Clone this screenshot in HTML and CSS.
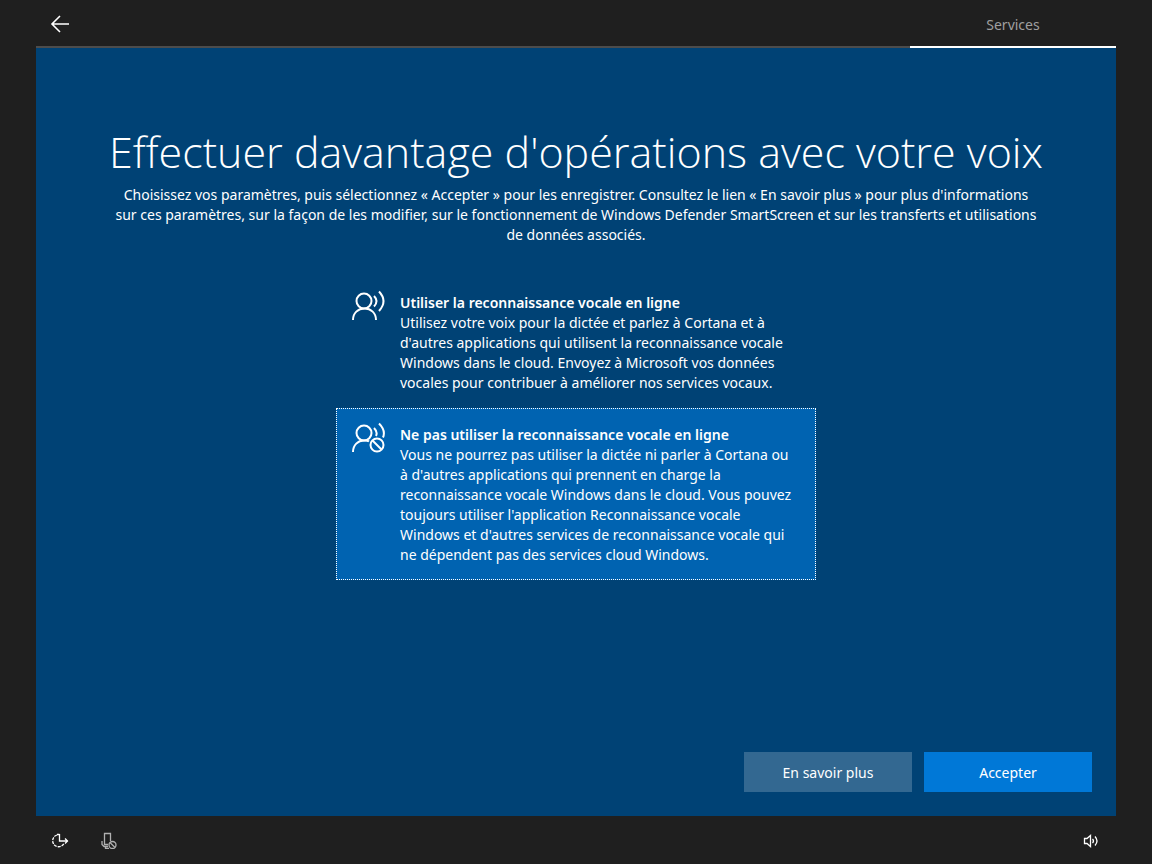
FILE: index.html
```html
<!DOCTYPE html>
<html lang="fr">

<head>
    <meta charset="utf-8">
    <title>Services</title>
    <link rel="stylesheet" href="styles.css">
</head>

<body>
    <header class="topbar">
        <button type="button" class="back" aria-label="Retour">
            <svg width="20" height="18" viewBox="0 0 20 18">
                <path d="M10 1L2 9l8 8M2 9h17" />
            </svg>
        </button>
        <nav class="steps">
            <a href="#services" class="step">Services</a>
        </nav>
    </header>

    <main id="services">
        <h1>Effectuer davantage d'opérations avec votre voix</h1>
        <p class="intro">
            Choisissez vos paramètres, puis sélectionnez « Accepter » pour les enregistrer. Consultez le lien « En savoir plus » pour plus d'informations<br>
            sur ces paramètres, sur la façon de les modifier, sur le fonctionnement de Windows Defender SmartScreen et sur les transferts et utilisations<br>
            de données associés.
        </p>

        <form id="form" action="">
            <div class="options">
                <div class="option">
                    <input type="radio" name="voix" id="voix-oui" value="oui">
                    <label for="voix-oui">
                        <svg width="34" height="32" viewBox="0 0 34 32">
                            <circle cx="12" cy="12" r="7.500" />
                            <path d="M1 31c0-7 5-11.500 11.500-11.500S24 24 24 31" />
                            <path d="M22 7q5 5 0 10.500M27 2.500q9 9.500 0 19.500" />
                        </svg>
                        <span class="text">
                            <b>Utiliser la reconnaissance vocale en ligne</b><br>
                            Utilisez votre voix pour la dictée et parlez à Cortana et à<br>
                            d'autres applications qui utilisent la reconnaissance vocale<br>
                            Windows dans le cloud. Envoyez à Microsoft vos données<br>
                            vocales pour contribuer à améliorer nos services vocaux.
                        </span>
                    </label>
                </div>
                <div class="option">
                    <input type="radio" name="voix" id="voix-non" value="non" checked>
                    <label for="voix-non">
                        <svg width="34" height="32" viewBox="0 0 34 32">
                            <circle cx="12" cy="12" r="7.500" />
                            <path d="M1 31c0-7 5-11.500 11-11.500 2 0 4 0 5 1" />
                            <path d="M22 7q4 4 2 8M27 2.500q7 7 4 14" />
                            <circle cx="25" cy="24" r="6.500" />
                            <path d="M20.500 19.500l9 9" />
                        </svg>
                        <span class="text">
                            <b>Ne pas utiliser la reconnaissance vocale en ligne</b><br>
                            Vous ne pourrez pas utiliser la dictée ni parler à Cortana ou<br>
                            à d'autres applications qui prennent en charge la<br>
                            reconnaissance vocale Windows dans le cloud. Vous pouvez<br>
                            toujours utiliser l'application Reconnaissance vocale<br>
                            Windows et d'autres services de reconnaissance vocale qui<br>
                            ne dépendent pas des services cloud Windows.
                        </span>
                    </label>
                </div>
            </div>
            <div class="actions">
                <button type="button">En savoir plus</button>
                <button type="submit" class="primary">Accepter</button>
            </div>
        </form>
    </main>

    <footer class="bottombar">
        <button type="button" aria-label="Options d'ergonomie">
            <svg width="18" height="18" viewBox="0 0 18 18">
                <path d="M6 4a6 6 0 1 0 7 8.500" stroke-dasharray="3 1" />
                <path d="M8.500 3v7H17M14 7.500l2.500 2.500-2.500 2.500M8.500 3.500H6" />
            </svg>
        </button>
        <button type="button" class="muted" aria-label="Micro désactivé">
            <svg width="18" height="18" viewBox="0 0 18 18">
                <path d="M9 13.500H5.500v-11h6V10M3 10v3.500l2 2h4M6.500 15.500v2H10" />
                <circle cx="13.500" cy="14" r="3.500" />
                <path d="M11 11.500l5 5" />
            </svg>
        </button>
        <button type="button" class="volume" aria-label="Volume">
            <svg width="18" height="18" viewBox="0 0 18 18">
                <path d="M1.500 7.500H4L7.500 4.500v11L4 12.500H1.500z" />
                <path d="M9.500 8q2 2 0 4M12 5.500q4 4.500 0 9" />
            </svg>
        </button>
    </footer>
</body>

</html>
```
FILE: styles.css
```css
* {
    box-sizing: border-box;
}

body {
    margin: 0;
    min-height: 100vh;
    display: flex;
    flex-direction: column;
    background: #1f1f1f;
    color: #fff;
    font-family: "Segoe UI", "Noto Sans", "Open Sans", sans-serif;
    font-size: 14px;
    line-height: 20px;
}

svg {
    display: block;
    fill: none;
    stroke: currentColor;
}

button {
    border: none;
    padding: 0;
    color: inherit;
    background: none;
    font: inherit;
}

.topbar {
    display: flex;
    justify-content: space-between;
    height: 48px;
    margin: 0 36px;
    border-bottom: 2px solid #4c4c4c;
}

.back {
    width: 48px;
    height: 48px;
    padding-left: 14px;
}

.back svg {
    stroke-width: 1.6;
}

.step {
    display: block;
    width: 206px;
    height: 48px;
    border-bottom: 2px solid #fff;
    color: #9f9f9f;
    line-height: 50px;
    text-align: center;
    text-decoration: none;
}

main {
    flex: 1;
    display: flex;
    flex-direction: column;
    margin: 0 36px;
    padding: 72px 24px 24px;
    background: #004275;
}

h1 {
    margin: 0 0 1px;
    font-family: "Segoe UI Light", "Open Sans", sans-serif;
    font-size: 43px;
    font-weight: 300;
    line-height: 64px;
    text-align: center;
}

.intro {
    margin: 0;
    text-align: center;
}

#form {
    flex: 1;
    display: flex;
    flex-direction: column;
    justify-content: space-between;
}

.options {
    width: 480px;
    margin: 31px auto;
}

.option input {
    position: absolute;
    opacity: 0;
}

.option label {
    display: flex;
    gap: 14px;
    padding: 16px 15px 14px;
    border: 1px solid transparent;
}

.option svg {
    flex: none;
    margin-top: -4px;
    stroke-width: 2;
}

.option b {
    font-weight: 600;
}

.option input:checked + label {
    background: #0063b1;
    border: 1px dotted #fff;
}

.text {
    white-space: nowrap;
}

.actions {
    display: flex;
    justify-content: flex-end;
    gap: 12px;
}

.actions button {
    width: 168px;
    height: 40px;
    padding-top: 1px;
    background: #336891;
}

.actions .primary {
    background: #0078d7;
}

.bottombar {
    display: flex;
    align-items: center;
    height: 48px;
    padding: 0 36px;
}

.bottombar button {
    display: flex;
    align-items: center;
    justify-content: center;
    width: 48px;
    height: 48px;
}

.bottombar svg {
    stroke-width: 1.3;
}

.bottombar .muted {
    color: #b0b0b0;
}

.bottombar .volume {
    margin-left: auto;
}
```
